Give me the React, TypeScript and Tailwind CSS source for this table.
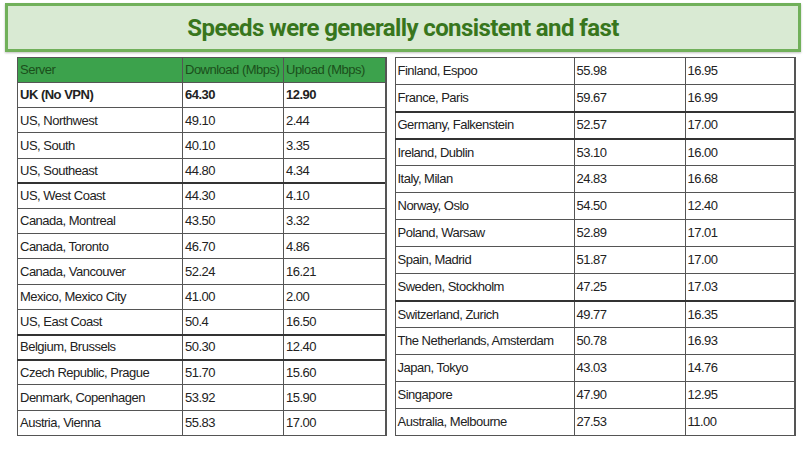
import React from "react";

type Row = { name: string; down: string; up: string; bold?: boolean; thick?: boolean };

const leftRows: Row[] = [
  { name: "UK (No VPN)", down: "64.30", up: "12.90", bold: true },
  { name: "US, Northwest", down: "49.10", up: "2.44" },
  { name: "US, South", down: "40.10", up: "3.35" },
  { name: "US, Southeast", down: "44.80", up: "4.34" },
  { name: "US, West Coast", down: "44.30", up: "4.10", thick: true },
  { name: "Canada, Montreal", down: "43.50", up: "3.32" },
  { name: "Canada, Toronto", down: "46.70", up: "4.86" },
  { name: "Canada, Vancouver", down: "52.24", up: "16.21" },
  { name: "Mexico, Mexico City", down: "41.00", up: "2.00" },
  { name: "US, East Coast", down: "50.4", up: "16.50" },
  { name: "Belgium, Brussels", down: "50.30", up: "12.40", thick: true },
  { name: "Czech Republic, Prague", down: "51.70", up: "15.60", thick: true },
  { name: "Denmark, Copenhagen", down: "53.92", up: "15.90" },
  { name: "Austria, Vienna", down: "55.83", up: "17.00" },
];

const rightRows: Row[] = [
  { name: "Finland, Espoo", down: "55.98", up: "16.95" },
  { name: "France, Paris", down: "59.67", up: "16.99" },
  { name: "Germany, Falkenstein", down: "52.57", up: "17.00", thick: true },
  { name: "Ireland, Dublin", down: "53.10", up: "16.00", thick: true },
  { name: "Italy, Milan", down: "24.83", up: "16.68" },
  { name: "Norway, Oslo", down: "54.50", up: "12.40" },
  { name: "Poland, Warsaw", down: "52.89", up: "17.01" },
  { name: "Spain, Madrid", down: "51.87", up: "17.00" },
  { name: "Sweden, Stockholm", down: "47.25", up: "17.03" },
  { name: "Switzerland, Zurich", down: "49.77", up: "16.35", thick: true },
  { name: "The Netherlands, Amsterdam", down: "50.78", up: "16.93" },
  { name: "Japan, Tokyo", down: "43.03", up: "14.76" },
  { name: "Singapore", down: "47.90", up: "12.95" },
  { name: "Australia, Melbourne", down: "27.53", up: "11.00" },
];

const cell = "border border-[#555] pl-[2px] pr-1 text-left align-middle whitespace-nowrap";

const App = () => {
  return (
    <div
      className="w-[806px] h-[453px] bg-white text-[#222] overflow-hidden"
      style={{ fontFamily: "'Liberation Sans', Arial, sans-serif" }}
    >
      {/* Banner */}
      <div className="mx-[5px] mt-[3px] h-[49px] border-[3px] border-[#71b05a] bg-[#d9ead3] shadow-[0_1px_2px_rgba(0,0,0,0.25)] flex items-center justify-center">
        <h1
          className="text-[24px] font-bold text-[#38761d] tracking-[-0.6px]"
          style={{ fontFamily: "'Liberation Sans Narrow', Roboto, sans-serif" }}
        >
          Speeds were generally consistent and fast
        </h1>
      </div>

      <div className="flex mt-[5px] text-[13px] tracking-[-0.5px]">
        {/* Left table */}
        <table className="ml-[17px] border-collapse table-fixed w-[368px]">
          <colgroup>
            <col className="w-[165px]" />
            <col className="w-[101px]" />
            <col className="w-[102px]" />
          </colgroup>
          <thead>
            <tr className="h-[25px] bg-[#3ca24c] text-[#1b4f1b]">
              <td className={cell}>Server</td>
              <td className={cell}>Download (Mbps)</td>
              <td className={`${cell} border-r-2`}>Upload (Mbps)</td>
            </tr>
          </thead>
          <tbody>
            {leftRows.map((r) => (
              <tr
                key={r.name}
                className={`h-[25.2px] ${r.bold ? "font-bold" : ""} ${r.thick ? "border-t-2 border-t-[#333]" : ""}`}
              >
                <td className={cell}>{r.name}</td>
                <td className={cell}>{r.down}</td>
                <td className={`${cell} border-r-2`}>{r.up}</td>
              </tr>
            ))}
          </tbody>
        </table>

        {/* Right table */}
        <table className="ml-[8px] border-collapse table-fixed w-[400px]">
          <colgroup>
            <col className="w-[179px]" />
            <col className="w-[111px]" />
            <col className="w-[110px]" />
          </colgroup>
          <tbody>
            {rightRows.map((r) => (
              <tr
                key={r.name}
                className={`h-[27px] ${r.thick ? "border-t-2 border-t-[#333]" : ""}`}
              >
                <td className={cell}>{r.name}</td>
                <td className={cell}>{r.down}</td>
                <td className={`${cell} border-r-2`}>{r.up}</td>
              </tr>
            ))}
          </tbody>
        </table>
      </div>
    </div>
  );
};

export default App;
